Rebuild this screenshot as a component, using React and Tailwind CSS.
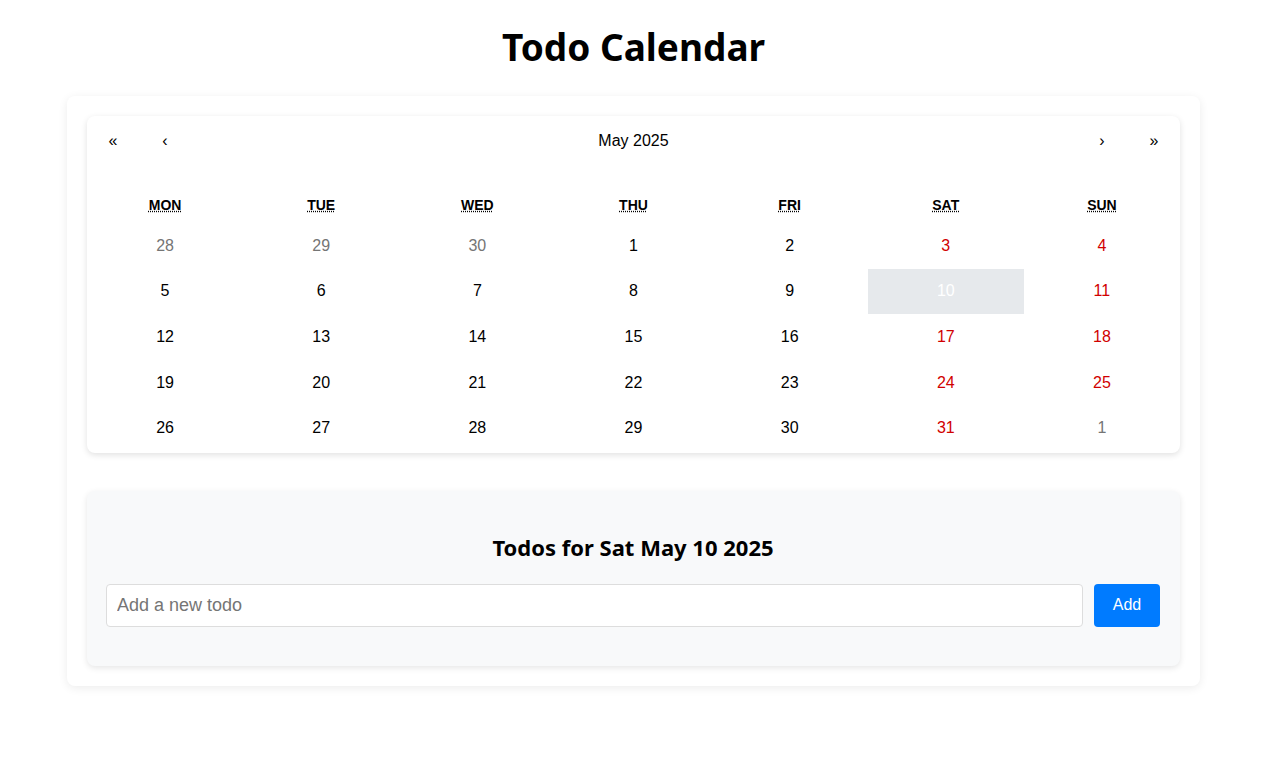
import React from "react";

const weekdays = ["MON", "TUE", "WED", "THU", "FRI", "SAT", "SUN"];

const weeks = [
  [28, 29, 30, 1, 2, 3, 4],
  [5, 6, 7, 8, 9, 10, 11],
  [12, 13, 14, 15, 16, 17, 18],
  [19, 20, 21, 22, 23, 24, 25],
  [26, 27, 28, 29, 30, 31, 1],
];

function tileClass(wi, di, d) {
  const neighbor = (wi === 0 && d > 20) || (wi === 4 && d < 10);
  if (wi === 1 && di === 5) return "bg-[#e6e9ec] text-white";
  if (neighbor) return "text-[#757575]";
  if (di >= 5) return "text-[#d10000]";
  return "text-black";
}

export default function App() {
  return (
    <div className="min-h-[765px] bg-white font-['Liberation_Sans',Arial,sans-serif]">
      <h1 className="pt-[24px] pb-[26px] ml-[67px] w-[1133px] text-center font-['Noto_Sans',sans-serif] font-bold text-[37px] leading-[46px] text-black">
        Todo Calendar
      </h1>
      <div className="ml-[67px] w-[1133px] rounded-lg bg-white p-5 shadow-[0_2px_10px_rgba(0,0,0,0.08)]">
        <div className="rounded-lg bg-white pb-[2px] shadow-[0_2px_6px_rgba(0,0,0,0.12)]">
          <div className="flex h-[50px] items-center text-[16px] text-black">
            <button className="h-full w-[52px]">«</button>
            <button className="h-full w-[52px]">‹</button>
            <div className="flex-1 text-center">May 2025</div>
            <button className="h-full w-[52px]">›</button>
            <button className="h-full w-[52px]">»</button>
          </div>
          <div className="grid grid-cols-7 pt-[22px] h-[57px]">
            {weekdays.map((w) => (
              <div key={w} className="flex h-[34px] items-center justify-center">
                <abbr className="text-[14px] font-bold text-black underline decoration-dotted underline-offset-1">
                  {w}
                </abbr>
              </div>
            ))}
          </div>
          {weeks.map((week, wi) => (
            <div key={wi} className="grid grid-cols-7">
              {week.map((d, di) => (
                <div
                  key={di}
                  className={`flex h-[45.6px] items-center justify-center text-[16px] ${tileClass(wi, di, d)}`}
                >
                  {d}
                </div>
              ))}
            </div>
          ))}
        </div>
        <div className="mt-[38px] rounded-lg bg-[#f8f9fa] pl-[19px] pr-5 pt-[41px] pb-[39px] shadow-[0_2px_6px_rgba(0,0,0,0.1)]">
          <h3 className="text-center font-['Noto_Sans',sans-serif] font-bold text-[22px] leading-[30px] text-black">
            Todos for Sat May 10 2025
          </h3>
          <div className="mt-[22px] flex gap-[11px]">
            <input
              className="h-[43px] flex-1 rounded border border-[#dddddd] bg-white px-[10px] text-[18px] text-black placeholder:text-[#757575] outline-none"
              placeholder="Add a new todo"
            />
            <button className="h-[43px] w-[66px] rounded bg-[#007bff] text-[16px] text-white">
              Add
            </button>
          </div>
        </div>
      </div>
    </div>
  );
}
